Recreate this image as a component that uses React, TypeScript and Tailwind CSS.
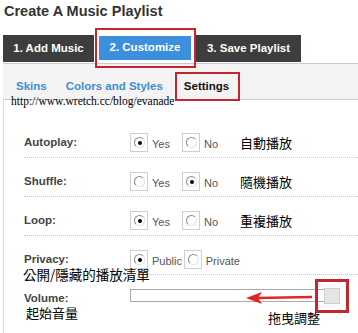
import React from 'react';

const cjk = { fontFamily: '"Noto Sans CJK TC", "Noto Sans CJK SC", sans-serif' };

const Radio: React.FC<{ checked?: boolean }> = ({ checked }) => (
  <div className="w-[18px] h-[19px] border border-[#cfcfcf] bg-white flex items-start justify-start pt-[3px] pl-[3px]">
    <div className="w-[11px] h-[11px] rounded-full border border-t-[#8a8a8a] border-l-[#8a8a8a] border-r-[#e4e4e4] border-b-[#e4e4e4] bg-white flex items-center justify-center">
      {checked && <div className="w-[4px] h-[4px] rounded-full bg-black" />}
    </div>
  </div>
);

const Option: React.FC<{ label: string; checked?: boolean; width: string }> = ({ label, checked, width }) => (
  <div className={`flex items-center ${width}`}>
    <Radio checked={checked} />
    <span className="ml-[4px] mt-[3px] text-[11px] text-[#555]">{label}</span>
  </div>
);

interface RowProps {
  label: string;
  children: React.ReactNode;
  note?: string;
}

const Row: React.FC<RowProps> = ({ label, children, note }) => (
  <div className="flex items-center h-[39px] pt-[9px] border-b border-dotted border-[#c8c8c8]">
    <div className="w-[106px] text-[11.5px] font-bold text-[#444]">{label}</div>
    <div className="w-[110px] flex items-center">{children}</div>
    {note && (
      <span className="text-[13px] text-black mt-[1px]" style={cjk}>
        {note}
      </span>
    )}
  </div>
);

export default function App() {
  return (
    <div
      className="relative w-[358px] h-[333px] bg-white overflow-hidden"
      style={{ fontFamily: '"Liberation Sans", Arial, sans-serif' }}
    >
      <h1 className="h-[35px] pl-[4px] pt-[3px] text-[14.5px] leading-[17px] font-bold text-[#333]">
        Create A Music Playlist
      </h1>

      <div className="ml-[3px] flex items-start h-[28px] text-[11.5px] font-bold text-white">
        <div className="w-[91px] h-[27px] bg-[#3d3d3d] flex items-center justify-center">1. Add Music</div>
        <div className="ml-[5px] w-[92px] h-[24px] mt-[1px] bg-[#3b8fdc] flex items-center justify-center">
          2. Customize
        </div>
        <div className="ml-[5px] w-[105px] h-[27px] bg-[#3d3d3d] flex items-center justify-center">
          3. Save Playlist
        </div>
      </div>

      <div className="ml-[3px] h-[37px] bg-[#f3f3f3] border-t border-b border-[#cccccc] flex items-start pt-[15px] pl-[13px] text-[11.5px] font-bold leading-[14px]">
        <span className="text-[#3d8fd1]">Skins</span>
        <span className="ml-[19px] text-[#3d8fd1]">Colors and Styles</span>
        <span className="ml-[21px] text-[#111]">Settings</span>
      </div>

      <div className="ml-[3px] h-[233px] border-l border-[#dddddd] pl-[20px] pt-[19px]">
        <Row label="Autoplay:" note="自動播放">
          <Option label="Yes" checked width="w-[52px]" />
          <Option label="No" width="w-[40px]" />
        </Row>
        <Row label="Shuffle:" note="隨機播放">
          <Option label="Yes" width="w-[52px]" />
          <Option label="No" checked width="w-[40px]" />
        </Row>
        <Row label="Loop:" note="重複播放">
          <Option label="Yes" checked width="w-[52px]" />
          <Option label="No" width="w-[40px]" />
        </Row>
        <Row label="Privacy:">
          <Option label="Public" checked width="w-[58px]" />
          <Option label="Private" width="w-[60px]" />
        </Row>
        <div className="flex items-start h-[39px] pt-[13px]">
          <div className="w-[106px] text-[11.5px] font-bold text-[#444] mt-[2px]">Volume:</div>
          <div className="relative w-[210px] h-[16px]">
            <div className="absolute left-0 top-[1px] w-[202px] h-[13px] border border-[#a8a8a8] bg-white" />
            <div className="absolute left-[194px] top-0 w-[16px] h-[16px] bg-[#e6e6e6] border border-[#cdcdcd]" />
          </div>
        </div>
      </div>

      {/* watermark + annotations */}
      <div
        className="absolute left-[11px] top-[94px] text-[11.5px] leading-[14px] text-black"
        style={{ fontFamily: '"Liberation Serif", "Times New Roman", serif' }}
      >
        http://www.wretch.cc/blog/evanade
      </div>

      <div className="absolute left-[95px] top-[28px] w-[101px] h-[40px] border-2 border-[#c3262d]" />
      <div className="absolute left-[175px] top-[72px] w-[65px] h-[29px] border-2 border-[#c3262d]" />
      <div className="absolute left-[315px] top-[279px] w-[34px] h-[34px] border-[3px] border-[#c3262d]" />

      <svg className="absolute left-[244px] top-[290px]" width="72" height="16" viewBox="0 0 72 16">
        <line x1="12" y1="8" x2="68" y2="7" stroke="#e3242b" strokeWidth="2.5" />
        <path d="M2 8 L18 2 L14 8 L18 14 Z" fill="#e3242b" />
      </svg>

      <div className="absolute left-[23px] top-[265px] text-[13.5px] leading-[18px] text-black" style={cjk}>
        公開/隱藏的播放清單
      </div>
      <div className="absolute left-[26px] top-[304px] text-[13px] leading-[18px] text-black" style={cjk}>
        起始音量
      </div>
      <div className="absolute left-[268px] top-[309px] text-[13px] leading-[18px] text-black" style={cjk}>
        拖曳調整
      </div>
    </div>
  );
}
